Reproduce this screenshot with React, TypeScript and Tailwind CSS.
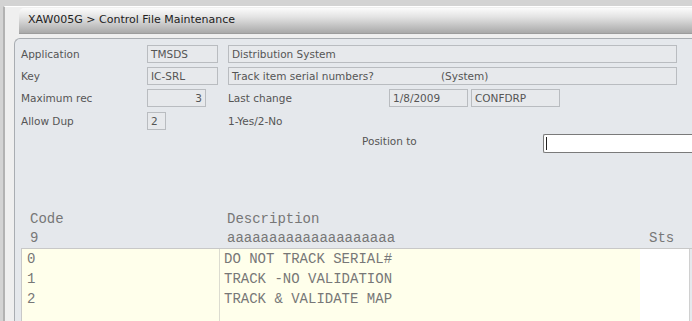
const sans = "font-['DejaVu_Sans',sans-serif]";
const mono = "font-['Liberation_Mono',monospace]";

const box =
  "h-[18px] flex-none border border-[#b9bcc0] bg-[#e7e9ec] px-[3px] text-[10.5px] leading-[16px] text-[#555] whitespace-nowrap overflow-hidden";

const rows = [
  { code: "0", desc: "DO NOT TRACK SERIAL#" },
  { code: "1", desc: "TRACK -NO VALIDATION" },
  { code: "2", desc: "TRACK & VALIDATE MAP" },
];

function Label({ children }: { children: React.ReactNode }) {
  return (
    <span className="w-[126px] flex-none text-[10.5px] leading-[18px] text-[#555]">
      {children}
    </span>
  );
}

export default function App() {
  return (
    <div className={`h-[321px] w-[692px] overflow-hidden bg-[#d3d3d3] pl-[3px] pt-[6px] ${sans}`}>
      <div className="h-full border-l-2 border-t border-l-[#b2b2b2] border-t-white bg-[#efefef]">
        {/* title bar */}
        <div className="ml-[14px] mt-[1px] flex h-[26px] items-center rounded-tl-[5px] border-b border-[#9c9c9c] bg-[linear-gradient(#fbfbfb,#e4e4e4_35%,#a9a9a9)] pl-[9px] text-[11px] text-[#222]">
          XAW005G &gt; Control File Maintenance
        </div>

        {/* panel */}
        <div className="ml-[9px] mt-[4px] h-[300px] rounded-tl-[6px] border border-r-0 border-[#a9adb2] bg-[#e5e8ec] pl-[6px] pt-[6px]">
          <div className="flex h-[22px] items-start">
            <Label>Application</Label>
            <div className={`${box} w-[71px]`}>TMSDS</div>
            <div className={`${box} ml-[10px] w-[449px]`}>Distribution System</div>
          </div>
          <div className="flex h-[22px] items-start">
            <Label>Key</Label>
            <div className={`${box} w-[71px]`}>IC-SRL</div>
            <div className={`${box} ml-[10px] w-[449px]`}>
              <span className="inline-block w-[209px]">Track item serial numbers?</span>
              (System)
            </div>
          </div>
          <div className="flex h-[22px] items-start">
            <Label>Maximum rec</Label>
            <div className={`${box} w-[59px] text-right`}>3</div>
            <span className="ml-[22px] w-[161px] flex-none text-[10.5px] leading-[18px] text-[#555]">
              Last change
            </span>
            <div className={`${box} w-[79px]`}>1/8/2009</div>
            <div className={`${box} ml-[3px] w-[89px]`}>CONFDRP</div>
          </div>
          <div className="flex h-[22px] items-start pt-[1px]">
            <Label>Allow Dup</Label>
            <div className={`${box} w-[19px]`}>2</div>
            <span className="ml-[62px] flex-none text-[10.5px] leading-[18px] text-[#555]">1-Yes/2-No</span>
          </div>
          <div className="flex h-[22px] items-start pt-[1px]">
            <span className="ml-[341px] w-[181px] flex-none text-[10.5px] leading-[14px] text-[#555]">
              Position to
            </span>
            <div className="flex h-[19px] w-[160px] flex-none items-center rounded-l-[2px] border border-r-0 border-[#7a7a7a] bg-white pl-[2px]">
              <span className="h-[13px] w-px bg-[#222]" />
            </div>
          </div>

          {/* grid header */}
          <div className={`mt-[55px] ${mono} text-[14px] text-[#777]`}>
            <div className="flex h-[19px] items-center">
              <span className="w-[206px] flex-none pl-[9px]">Code</span>
              <span>Description</span>
            </div>
            <div className="flex h-[19px] items-center">
              <span className="w-[206px] flex-none pl-[9px]">9</span>
              <span className="w-[422px] flex-none">aaaaaaaaaaaaaaaaaaaa</span>
              <span>Sts</span>
            </div>
          </div>

          {/* grid body */}
          <div className={`flex h-[80px] border-l border-t border-[#c8c8c8] ${mono} text-[14px] text-[#777]`}>
            <div className="flex w-[618px] flex-none bg-[#ffffeb]">
              <div className="w-[198px] flex-none border-r border-[#dcdcd0] pl-[5px]">
                {rows.map((r) => (
                  <div key={r.code} className="h-[20px] leading-[20px]">
                    {r.code}
                  </div>
                ))}
              </div>
              <div className="pl-[4px]">
                {rows.map((r) => (
                  <div key={r.code} className="h-[20px] leading-[20px]">
                    {r.desc}
                  </div>
                ))}
              </div>
            </div>
            <div className="w-[50px] flex-none border-r border-[#d0d0d0] bg-white" />
          </div>
        </div>
      </div>
    </div>
  );
}
